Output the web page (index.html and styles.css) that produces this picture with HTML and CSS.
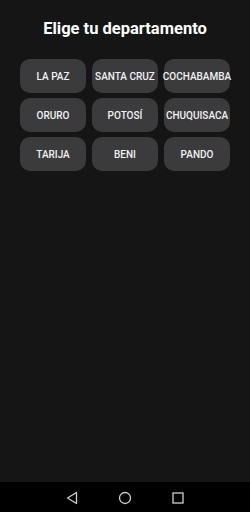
FILE: index.html
```html
<!DOCTYPE html>
<html lang="es">
<head>
<meta charset="utf-8">
<link rel="stylesheet" href="styles.css">
</head>
<body>
<div class="screen">
  <main class="content">
    <h1 class="title">Elige tu departamento</h1>
    <div class="grid">
      <button class="dept">LA PAZ</button>
      <button class="dept">SANTA CRUZ</button>
      <button class="dept">COCHABAMBA</button>
      <button class="dept">ORURO</button>
      <button class="dept">POTOSÍ</button>
      <button class="dept">CHUQUISACA</button>
      <button class="dept">TARIJA</button>
      <button class="dept">BENI</button>
      <button class="dept">PANDO</button>
    </div>
  </main>
  <nav class="navbar">
    <svg class="nav-icon" width="12" height="14" viewBox="0 0 12 14"><path d="M10.5 1.5 L1.5 7 L10.5 12.5 Z" fill="none" stroke="#cfcfcf" stroke-width="1.3" stroke-linejoin="round"/></svg>
    <svg class="nav-icon" width="14" height="14" viewBox="0 0 14 14"><circle cx="7" cy="7" r="5.5" fill="none" stroke="#cfcfcf" stroke-width="1.3"/></svg>
    <svg class="nav-icon" width="12" height="12" viewBox="0 0 12 12"><rect x="1" y="1" width="10" height="10" fill="none" stroke="#cfcfcf" stroke-width="1.3"/></svg>
  </nav>
</div>
</body>
</html>
```
FILE: styles.css
```css
* { box-sizing: border-box; }
html, body {
  margin: 0;
  padding: 0;
  background: #151515;
  font-family: Roboto, "Liberation Sans", sans-serif;
}
.screen {
  width: 250px;
  height: 512px;
  display: flex;
  flex-direction: column;
}
.content {
  flex: 1;
  display: flex;
  flex-direction: column;
  align-items: center;
  padding-top: 18px;
}
.title {
  margin: 0;
  color: #ffffff;
  font-size: 16.5px;
  line-height: 22px;
  font-weight: 700;
}
.grid {
  margin-top: 19px;
  display: grid;
  grid-template-columns: repeat(3, 66px);
  grid-auto-rows: 34px;
  column-gap: 6px;
  row-gap: 5px;
}
.dept {
  border: none;
  border-radius: 10px;
  background: #3b3b3d;
  color: #f2f2f2;
  font-family: Roboto, "Liberation Sans", sans-serif;
  font-size: 10px;
  font-weight: 500;
  padding: 0;
  white-space: nowrap;
  display: flex;
  align-items: center;
  justify-content: center;
}
.navbar {
  height: 30px;
  background: #000000;
  display: flex;
  align-items: center;
  justify-content: center;
  gap: 40px;
  padding-top: 1px;
}
.nav-icon { display: block; }
```
